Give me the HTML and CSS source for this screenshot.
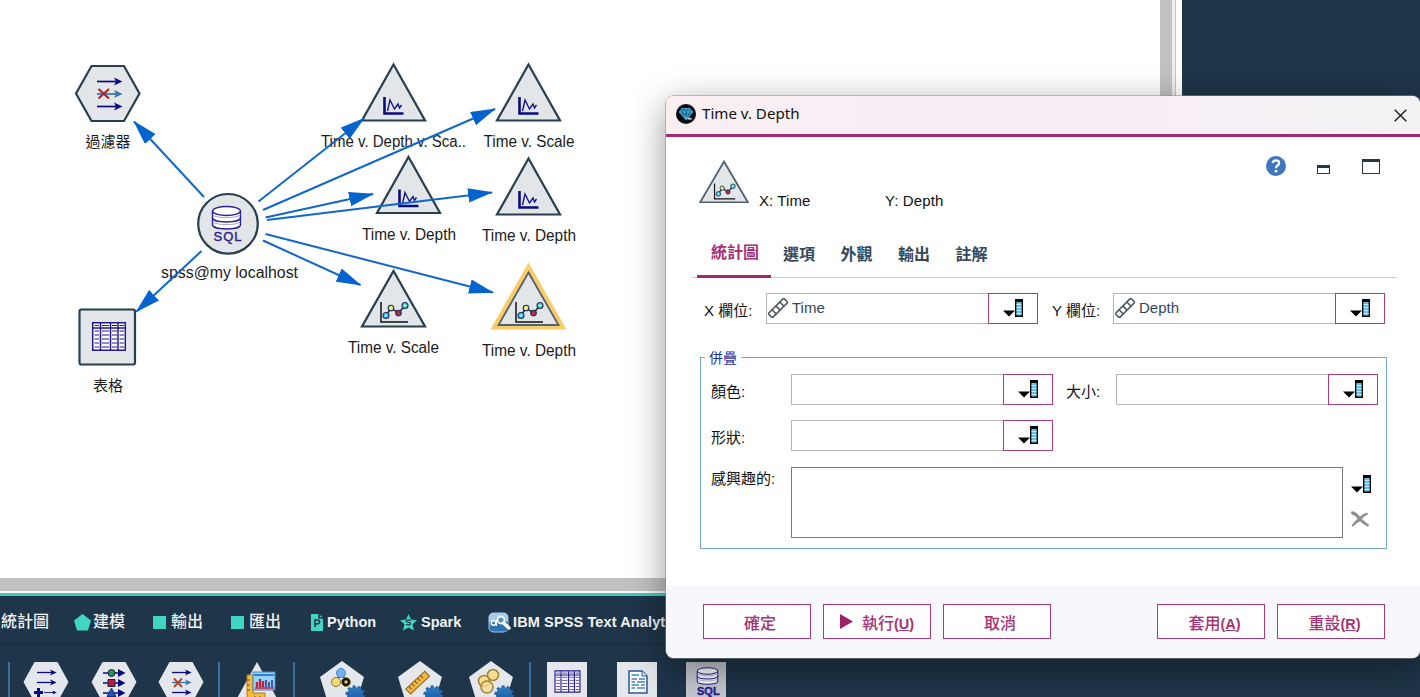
FILE: index.html
```html
<!DOCTYPE html>
<html lang="zh-Hant">
<head>
<meta charset="utf-8">
<title>Time v. Depth</title>
<link rel="stylesheet" href="styles.css">
</head>
<body>
<svg class="defs" width="0" height="0">
  <defs>
    <marker id="arrow" viewBox="0 0 24 14" refX="23" refY="7" markerWidth="25" markerHeight="14.500" markerUnits="userSpaceOnUse" orient="auto" preserveAspectRatio="none"><path d="M0 0L24 7L0 14Z" fill="#0563cd"/></marker>
    <linearGradient id="gearfill" x2="0" y2="1"><stop offset="0" stop-color="#2f7cc8"/><stop offset="1" stop-color="#185399"/></linearGradient>
    <symbol id="line-plot" viewBox="0 0 66 60" overflow="visible">
      <path class="shape" d="M33 2.500L64.500 58.500H1.500Z"/>
      <path d="M24 35V51.500H43" fill="none" stroke="#0a0a80" stroke-width="2.600"/>
      <path d="M27 49L29.500 38L34 47L37.500 42L39 46L41 43" fill="none" stroke="#15158a" stroke-width="1.400"/>
    </symbol>
    <symbol id="dots" viewBox="0 0 30 22" overflow="visible">
      <path d="M2 0V20H29" fill="none" stroke="#111" stroke-width="1.500"/>
      <path d="M7 13.500L12 6L19.500 11L26 3.500" fill="none" stroke="#222" stroke-width="1.500"/>
      <g stroke="#163463" stroke-width="1.100"><circle cx="7" cy="13.500" r="3" fill="#3cc4f2"/><circle cx="12" cy="6" r="2.800" fill="#e2e64b"/><circle cx="19.500" cy="11" r="2.800" fill="#c8283f"/><circle cx="26" cy="3.500" r="3" fill="#4ccfb1"/></g>
      <path d="M5.500 13.500h3M7 12v3M10.500 6h3M12 4.500v3M24.500 3.500h3M26 2v3" stroke="#fff" stroke-width=".6"/>
    </symbol>
    <symbol id="db" viewBox="0 0 34 40" overflow="visible">
      <g fill="none" stroke="#27208f" stroke-width="1.400"><path d="M3 5.500V18.500C3 24.500 31 24.500 31 18.500V5.500" fill="#fff"/><ellipse cx="17" cy="5" rx="14" ry="4.500" fill="#fff"/><path d="M3 11.500C3 17.500 31 17.500 31 11.500"/></g>
      <path d="M3 9C8 12.500 26 12.500 31 9M3 16C8 19.500 26 19.500 31 16" fill="none" stroke="#8f8bc8" stroke-width=".8"/>
    </symbol>
    <symbol id="table" viewBox="0 0 34 29" overflow="visible">
      <path d="M.7.700H33.300V28.300H.7Z" fill="#fff" stroke="#23188c" stroke-width="1.500"/>
      <path d="M8.500 1V28M18.500 1V28M26 1V28M1 6H33" fill="none" stroke="#23188c" stroke-width="1.500"/>
      <path d="M2.500 3.500H7M10 3.500H17M20 3.500H25M27.500 3.500H32M2.500 9H7M10 9H17M20 9H25M27.500 9H32M2.500 13H7M10 13H17M20 13H25M27.500 13H32M2.500 17H7M10 17H17M20 17H25M27.500 17H32M2.500 21H7M10 21H17M20 21H25M27.500 21H32M2.500 25H7M10 25H17M20 25H25M27.500 25H32" stroke="#23188c" stroke-width="1"/>
    </symbol>
    <symbol id="arr" viewBox="0 0 26 8" overflow="visible"><path d="M0 4H22" stroke="currentColor" stroke-width="1.700"/><path d="M17 0L25.500 4L17 8L19 4Z" fill="currentColor"/></symbol>
    <symbol id="picker" viewBox="0 0 20 18" overflow="visible">
      <path d="M0 11.500H12L6 17.500Z" fill="#000"/>
      <path d="M12.700.7H19.300V17.300H12.700Z" fill="#68c0ea" stroke="#000" stroke-width="1.400"/>
      <path d="M12 0H20V3H12Z" fill="#000"/><path d="M13.500 5.500H18.500M13.500 8.500H18.500M13.500 11.500H18.500M13.500 14.500H18.500" stroke="#bfe8fa" stroke-width="1"/>
    </symbol>
    <symbol id="ruler" viewBox="0 0 20 20" overflow="visible">
      <g transform="rotate(-45 10 10)" fill="#fff" stroke="#46535c" stroke-width="1.500"><path d="M-1 7H21V13H-1ZM4.500 7V13M10 7V13M15.500 7V13"/></g>
    </symbol>
    <symbol id="gear" viewBox="0 0 20 20" overflow="visible"><circle cx="10" cy="10" r="8" fill="url(#gearfill)"/><circle cx="10" cy="10" r="8.500" fill="none" stroke="#2468ae" stroke-width="2.500" stroke-dasharray="3 2.340"/></symbol>
  </defs>
</svg>

<div class="app">
  <div class="upper">
    <div class="canvas">
      <svg class="stream" width="1160" height="578" viewBox="0 0 1160 578">
        <path class="shape" d="M91.500 66H124L139.500 93.500L124 121H91.500L76 93.500Z"/>
        <g color="#0a0a80"><use href="#arr" x="97" y="77.500" width="26" height="8"/><use href="#arr" x="97" y="102.500" width="26" height="8"/></g>
        <use href="#arr" x="97" y="90" width="26" height="8" color="#3a72a8"/>
        <path d="M98.500 89L109 98.500M109 89L98.500 98.500" stroke="#a3282e" stroke-width="2.200"/>
        <circle class="shape" cx="228" cy="223.800" r="29.800"/>
        <use href="#db" x="209.500" y="206" width="34" height="40"/>
        <text class="sql" x="213.500" y="241" textLength="28">SQL</text>
        <rect class="shape" x="79.500" y="309.500" width="55.500" height="55" rx="2"/>
        <use href="#table" x="92" y="322" width="34" height="29"/>
        <use href="#line-plot" x="360.500" y="62" width="66" height="60"/>
        <use href="#line-plot" x="495.500" y="62" width="66" height="60"/>
        <use href="#line-plot" x="375.500" y="154.500" width="66" height="60"/>
        <use href="#line-plot" x="495.500" y="156" width="66" height="60"/>
        <path class="shape" d="M393.500 271L425 326.500H362Z"/>
        <use href="#dots" x="379" y="302" width="30" height="22"/>
        <path d="M528.500 269.500L560.500 326H496.500Z" fill="#e2e6e9" stroke="#facb69" stroke-width="7"/>
        <path d="M528.500 272.500L558.500 325H498.500Z" fill="#e2e6e9" stroke="#51636f" stroke-width="1.800"/>
        <use href="#dots" x="514" y="302" width="30" height="22"/>
        <g class="names">
          <text x="85.500" y="147" textLength="45">過濾器</text>
          <text x="93" y="391" textLength="30">表格</text>
          <text x="161" y="278" textLength="137" lengthAdjust="spacingAndGlyphs">spss@my localhost</text>
          <text x="321" y="147" textLength="145" lengthAdjust="spacingAndGlyphs">Time v. Depth v. Sca..</text>
          <text x="483.500" y="147" textLength="91" lengthAdjust="spacingAndGlyphs">Time v. Scale</text>
          <text x="362" y="239.500" textLength="94" lengthAdjust="spacingAndGlyphs">Time v. Depth</text>
          <text x="482" y="241" textLength="94" lengthAdjust="spacingAndGlyphs">Time v. Depth</text>
          <text x="348" y="353" textLength="91" lengthAdjust="spacingAndGlyphs">Time v. Scale</text>
          <text x="482" y="356" textLength="94" lengthAdjust="spacingAndGlyphs">Time v. Depth</text>
        </g>
        <g class="edges">
          <path d="M204 197L134 121.500" marker-end="url(#arrow)"/>
          <path d="M201.500 251L136.500 311.500" marker-end="url(#arrow)"/>
          <path d="M258.500 201.500L364 118.500" marker-end="url(#arrow)"/>
          <path d="M263 210L495 109" marker-end="url(#arrow)"/>
          <path d="M265.500 217.500L373 194" marker-end="url(#arrow)"/>
          <path d="M267 220L492 192.500" marker-end="url(#arrow)"/>
          <path d="M265.500 234L493 292.500" marker-end="url(#arrow)"/>
          <path d="M263 240.500L360.500 285" marker-end="url(#arrow)"/>
        </g>
      </svg>
    </div>
    <div class="vbar"></div>
    <div class="gutter"></div>
    <div class="side"></div>
  </div>
  <div class="hbar"></div>
  <div class="palette">
    <div class="cats">
      <span class="cat c1">統計圖</span>
      <span class="cat c2"><svg width="17" height="17" viewBox="0 0 17 17"><path d="M8.500 0L17 6.500L14 16.500H3L0 6.500Z" fill="#41d6c3"/></svg>建模</span>
      <span class="cat c3"><i class="sq"></i>輸出</span>
      <span class="cat c4"><i class="sq"></i>匯出</span>
      <span class="cat c5"><svg width="12" height="17" viewBox="0 0 12 17"><path d="M0 0H8L12 4V17H0Z" fill="#41d6c3"/><path d="M4 13V6H6.500Q9 6.200 8.500 8.500Q8 10 4 10M8 0V4H12" fill="none" stroke="#1f3549" stroke-width="1.500"/></svg>Python</span>
      <span class="cat c6"><svg width="17" height="17" viewBox="0 0 17 17"><path d="M8.500 0L11 5.500L17 6.200L12.500 10.200L14 16.500L8.500 13.500L3 16.500L4.500 10.200L0 6.200L6 5.500Z" fill="#41d6c3"/><path d="M11 6.500Q6 4.800 6.200 7.300Q7 8.200 10 8.700Q11.500 11.800 6 10.500" fill="none" stroke="#1f3549" stroke-width="1.200"/></svg>Spark</span>
      <span class="cat c7"><svg width="23" height="21" viewBox="0 0 23 21"><rect x=".5" y=".5" width="20" height="20" rx="5" fill="#a9cbe8"/><path d="M1.500 10Q10 6 20 10V16Q20 19.500 16 19.500H5Q1.500 19.500 1.500 16Z" fill="#2f72b2"/><circle cx="5.500" cy="11" r="2.200" fill="none" stroke="#fff" stroke-width="1.500"/><path d="M8.300 8V14" stroke="#fff" stroke-width="1.500"/><circle cx="13" cy="8" r="3.500" fill="#4f90c8" stroke="#fff" stroke-width="1.800"/><path d="M15.500 11L21 16" stroke="#fff" stroke-width="3.500" stroke-linecap="round"/></svg>IBM SPSS Text Analytics</span>
    </div>
    <div class="tools">
      <i class="sep s1"></i>
      <svg class="t1" width="46" height="40" viewBox="0 0 46 40"><path d="M11.500 0H34.500L45.500 20L34.500 40H11.500L.5 20Z" fill="#e4e8ec"/><g color="#0a0a80"><use href="#arr" x="14" y="7" width="20" height="7"/><use href="#arr" x="14" y="17" width="20" height="7"/><use href="#arr" x="21" y="27" width="13" height="7"/></g><path d="M15.500 26V35M11 30.500H20" stroke="#0a0a80" stroke-width="3"/></svg>
      <svg class="t2" width="46" height="40" viewBox="0 0 46 40"><path d="M11.500 0H34.500L45.500 20L34.500 40H11.500L.5 20Z" fill="#e4e8ec"/><path d="M12 11H28M12 21H28M12 31H28" stroke="#0a0a80" stroke-width="1.600"/><path d="M27 7L34.500 11L27 15ZM27 17L34.500 21L27 25ZM27 27L34.500 31L27 35Z" fill="#0a0a80"/><circle cx="20.500" cy="11" r="3.500" fill="#159768" stroke="#222"/><path d="M17 17.500H24V24.500H17Z" fill="#bb1651" stroke="#222"/><path d="M16 34.500L20.500 26L25 34.500Z" fill="#1757c5" stroke="#14316b"/></svg>
      <svg class="t3" width="46" height="40" viewBox="0 0 46 40"><path d="M11.500 0H34.500L45.500 20L34.500 40H11.500L.5 20Z" fill="#e4e8ec"/><g color="#0a0a80"><use href="#arr" x="14" y="7" width="20" height="7"/><use href="#arr" x="14" y="27" width="20" height="7"/></g><use href="#arr" x="14" y="17" width="20" height="7" color="#3a72a8"/><path d="M16 16.500L24 25M24 16.500L16 25" stroke="#b2462b" stroke-width="1.900"/></svg>
      <i class="sep s2"></i>
      <svg class="t4" width="46" height="40" viewBox="0 0 46 40"><path d="M22 0L44 40H0Z" fill="#e4e8ec"/><path d="M12 13H18V31H30V38H12Z" fill="#f2bd3d" stroke="#ba7a13"/><path d="M12 18H15M12 23H15M12 28H15M20 34V38M25 34V38" stroke="#805610"/><rect x="18" y="10" width="22" height="18" fill="#96d2f7" stroke="#3e88c7"/><path d="M19 13H39" stroke="#2e83d1" stroke-width="2"/><path d="M22 25V20M25 25V17M28 25V19" stroke="#c31f38" stroke-width="2.300"/><path d="M31 25V18M34 25V20M37 25V18" stroke="#45579a" stroke-width="2"/><path d="M20 26H39" stroke="#c31f38" stroke-width="1.500"/></svg>
      <i class="sep s3"></i>
      <svg class="t5" width="46" height="44" viewBox="0 0 46 44"><path d="M23 0L45 16L37 42H9L1 16Z" fill="#e4e8ec"/><path d="M17 20L22 12L28 21" stroke="#555" stroke-width="2" fill="none"/><circle cx="22" cy="12" r="4.500" fill="#72b2f2" stroke="#4187d2"/><circle cx="17" cy="21" r="4.500" fill="#f4dc79" stroke="#8c732b"/><circle cx="27" cy="21" r="4.500" fill="#111" stroke="#9a8b38"/><circle cx="27" cy="21" r="1.800" fill="#d9c751"/><use href="#gear" x="26" y="24" width="20" height="20"/></svg>
      <svg class="t6" width="46" height="44" viewBox="0 0 46 44"><path d="M23 0L45 16L37 42H9L1 16Z" fill="#e4e8ec"/><g transform="rotate(-43 21 22)"><rect x="8" y="18" width="26" height="7" fill="#f0b83e" stroke="#8c6422"/><path d="M12 18V22M16 18V22M20 18V22M24 18V22M28 18V22" stroke="#75521b"/></g><use href="#gear" x="26" y="24" width="20" height="20"/></svg>
      <svg class="t7" width="46" height="44" viewBox="0 0 46 44"><path d="M23 0L45 16L37 42H9L1 16Z" fill="#e4e8ec"/><g fill="#f7df91" stroke="#a48235" stroke-width="1.500"><circle cx="25" cy="14" r="5.500"/><circle cx="16" cy="20" r="5.500"/><circle cx="19" cy="26" r="6" fill-opacity=".75"/></g><use href="#gear" x="26" y="24" width="20" height="20"/></svg>
      <i class="sep s4"></i>
      <svg class="t8" width="40" height="40" viewBox="0 0 40 40"><path d="M0 0H40V40H0Z" fill="#e4e8ec"/><use href="#table" x="7.500" y="8" width="26" height="23"/></svg>
      <svg class="t9" width="40" height="40" viewBox="0 0 40 40"><path d="M0 0H40V40H0Z" fill="#e4e8ec"/><path d="M12 9H25L30 14V31H12Z" fill="#fff" stroke="#28569a" stroke-width="1.500"/><path d="M25 9V14H30" fill="#d8eaff" stroke="#28569a"/><path d="M14.500 13H22M14.500 17H20M22 17H28M14.500 20H18M20 20H28M14.500 23H22M24 23H28M14.500 26H18M20 26H28" stroke="#4a82bf" stroke-width="1.600"/></svg>
      <svg class="t10" width="40" height="40" viewBox="0 0 40 40"><path d="M0 0H40V40H0Z" fill="#c5c8ce"/><use href="#db" x="9" y="5" width="25" height="30"/><text x="11" y="33" class="sql mini">SQL</text></svg>
    </div>
  </div>
</div>

<section class="dialog">
  <header class="titlebar">
    <svg width="20" height="20" viewBox="0 0 20 20"><circle cx="10" cy="10" r="10" fill="#05090e"/><path d="M3.500 8L6 4.500H13.500L16.500 8L10 15.500Z" fill="#155b84" stroke="#3ba4d8" stroke-width="1.200"/><path d="M3.500 8H16.500M6 4.500L8 8L10 15L12.500 8L13.500 4.500M8 8L10 4.500L12.500 8" fill="none" stroke="#52b9e5" stroke-width=".8"/><path d="M11 15Q13 12.500 15 14L16.500 15.500H12Z" fill="#ddd"/></svg>
    <span class="title">Time v. Depth</span>
    <svg class="close" width="13" height="13" viewBox="0 0 13 13"><path d="M.7.700L12.300 12.300M12.300.7L.7 12.300" stroke="#111" stroke-width="1.300"/></svg>
  </header>
  <div class="summary">
    <svg class="big" width="50" height="44" viewBox="0 0 50 44"><path d="M25 2.500L49 43.500H1Z" fill="#e2e6e9" stroke="#50606c" stroke-width="1.800"/><use href="#dots" x="14" y="24.500" width="23" height="17"/></svg>
    <span class="xt">X: Time</span><span class="yt">Y: Depth</span>
    <div class="wicons">
      <svg class="help" width="20" height="20" viewBox="0 0 20 20"><circle cx="10" cy="10" r="10" fill="#3f76be"/><path d="M6.700 7Q7 4.300 10 4.300Q13.200 4.300 13.200 7Q13.200 8.500 11.500 9.500Q10 10.500 10 12.200" fill="none" stroke="#fff" stroke-width="2.200"/><circle cx="10" cy="15.200" r="1.400" fill="#fff"/></svg>
      <i class="min"></i><i class="max"></i>
    </div>
  </div>
  <nav class="tabs"><span class="tab on">統計圖</span><span class="tab">選項</span><span class="tab">外觀</span><span class="tab">輸出</span><span class="tab">註解</span></nav>
  <div class="row axes">
    <label class="lx">X 欄位:</label>
    <div class="field wx"><svg width="20" height="20"><use href="#ruler" width="20" height="20"/></svg>Time</div><div class="pick"><svg width="20" height="18"><use href="#picker" width="20" height="18"/></svg></div>
    <label class="ly">Y 欄位:</label>
    <div class="field wy"><svg width="20" height="20"><use href="#ruler" width="20" height="20"/></svg>Depth</div><div class="pick"><svg width="20" height="18"><use href="#picker" width="20" height="18"/></svg></div>
  </div>
  <div class="group">
    <div class="legend">併疊</div>
    <div class="row r1"><label class="lg">顏色:</label><div class="field w2"></div><div class="pick"><svg width="20" height="18"><use href="#picker" width="20" height="18"/></svg></div><label class="lsize">大小:</label><div class="field w2"></div><div class="pick"><svg width="20" height="18"><use href="#picker" width="20" height="18"/></svg></div></div>
    <div class="row r2"><label class="lg">形狀:</label><div class="field w2"></div><div class="pick"><svg width="20" height="18"><use href="#picker" width="20" height="18"/></svg></div></div>
    <div class="row r3"><label class="lg top">感興趣的:</label><div class="area"></div>
      <div class="acts"><svg width="20" height="18"><use href="#picker" width="20" height="18"/></svg><svg width="18" height="16" viewBox="0 0 18 16"><path d="M0 1Q3-1 9 6Q13 2 16.500 2L17 3Q13 5 10.500 8Q14 11 18 14L17 15.500Q12 13 9 10Q5 12 2 15.500L.8 14.500Q4 10 7 7.500Q4 4 .5 3Z" fill="#8e8e8e" stroke="#8e8e8e" stroke-width=".5"/></svg></div>
    </div>
  </div>
  <footer class="buttons">
    <span class="btn"><b class="ok">確定</b></span>
    <span class="btn run"><svg width="13" height="15" viewBox="0 0 13 15"><path d="M0 0L13 7.500L0 15Z" fill="#a0206c"/></svg><b>執行<span class="key">(<u>U</u>)</span></b></span>
    <span class="btn"><b class="cancel">取消</b></span>
    <span class="btn apply"><b>套用<span class="key">(<u>A</u>)</span></b></span>
    <span class="btn"><b>重設<span class="key">(<u>R</u>)</span></b></span>
  </footer>
</section>
</body>
</html>
```
FILE: styles.css
```css
* { box-sizing: border-box; }
body {
  margin: 0;
  width: 1420px;
  height: 697px;
  overflow: hidden;
  position: relative;
  background: #1f3549;
  font-family: "Liberation Sans", "Noto Sans CJK TC", sans-serif;
  font-size: 15px;
  color: #111;
}
svg { display: block; flex: none; }
.defs { position: absolute; }
.app { display: flex; flex-direction: column; height: 697px; }
.upper { display: flex; height: 578px; }
.canvas { width: 1160px; background: #fff; }
.vbar { width: 12px; background: #c1c1c1; }
.gutter { width: 10px; background: #fff; border-left: 3px solid #eee; box-shadow: inset 1px 0 #bcc6d8; }
.side { flex: 1; background: #1f3549; }
.hbar { height: 18px; background: #c1c1c1; border-bottom: 3px solid #41cdbb; box-shadow: inset 0 -2px #fafafa; }
.shape { fill: #e2e6e9; stroke: #273f4e; stroke-width: 2.2px; }
.edges path { fill: none; stroke: #1267c8; stroke-width: 2px; }
.names { fill: #1b1b1b; font-size: 16px; }
.names text:nth-child(-n+2) { font-size: 15px; }
.sql { fill: #27208f; font-size: 13px; font-weight: normal; stroke: #27208f; stroke-width: .4px; }
.mini { font-size: 11px; font-weight: bold; }

.palette { flex: 1; overflow: hidden; color: #f0f3f5; }
.cats { display: flex; height: 49px; align-items: center; border-bottom: 1px solid #152a3b; padding-top: 4px; white-space: nowrap; font-weight: bold; font-size: 14.5px; }
.cat { display: flex; align-items: center; flex: none; line-height: 20px; }
.c1, .c2, .c3, .c4 { font-size: 16px; font-weight: 500; }
.c1 { width: 74px; padding-left: 1px; }
.c2 { width: 79px; gap: 2px; }
.c3 { width: 78px; gap: 5px; }
.c4 { width: 80px; gap: 5px; }
.c5 { width: 89px; gap: 4px; }
.c6 { width: 88px; gap: 4px; }
.c7 { gap: 2px; letter-spacing: .12px; }
.sq { width: 13px; height: 13px; background: #41d6c3; }
.tools { display: flex; height: 60px; padding: 17px 0 0 0; align-items: flex-start; }
.sep { width: 2px; height: 50px; background: #386f9d; flex: none; }
.s1 { margin-left: 8px; }
.t1 { margin-left: 13px; }
.t2 { margin-left: 21.5px; }
.t3 { margin-left: 21.5px; }
.s2 { margin-left: 14px; }
.t4 { margin-left: 15px; }
.s3 { margin-left: 11.5px; }
.t5 { margin: -1px 0 0 24px; }
.t6 { margin: -1px 0 0 32px; }
.t7 { margin: -1px 0 0 25px; }
.s4 { margin-left: 15px; }
.t8 { margin-left: 16.5px; }
.t9 { margin-left: 30px; }
.t10 { margin-left: 29px; }

.dialog {
  position: absolute;
  left: 666px;
  top: 96px;
  width: 754px;
  height: 562px;
  border-radius: 8px;
  overflow: hidden;
  background: #fff;
  display: flex;
  flex-direction: column;
  box-shadow: 0 0 0 1px #8f8f8f88, 0 10px 36px rgba(0,0,0,.42);
}
.titlebar { display: flex; align-items: center; height: 41px; flex: none; padding: 0 13px 2px 10px; border-bottom: 3px solid #9e2b70; background: linear-gradient(90deg, #f9efef, #f8edf7 30%, #f8edf7 65%, #f4f1f4 85%, #f3f3f3); }
.title { flex: 1; margin: -3px 0 0 6px; font: 15.1px "Noto Sans", sans-serif; }
.close { margin-top: 2px; }
.summary { display: flex; height: 103px; flex: none; padding: 22px 40px 0 33px; }
.xt { margin: 33px 0 0 10px; width: 126px; letter-spacing: .1px; }
.yt { margin-top: 33px; letter-spacing: .1px; }
.wicons { display: flex; margin: -2px 0 0 auto; height: 20px; align-items: flex-end; }
.help { margin-bottom: 1px; }
.min { width: 13px; height: 9px; border: 1px solid #263746; border-top-width: 3px; margin: 0 32px 3px 31px; }
.max { width: 18px; height: 15px; border: 1px solid #263746; border-top-width: 3px; margin-bottom: 3px; }
.tabs { display: flex; height: 38px; flex: none; margin: 0 23px 0 25px; padding-left: 6px; border-bottom: 1px solid #ccc; font-size: 16px; color: #34495a; font-weight: 600; }
.tab { width: 32px; margin-left: 25.5px; padding-top: 5px; line-height: 20px; white-space: nowrap; }
.tab.on + .tab { margin-left: 12px; }
.tab.on { width: 74px; margin-left: 0; padding: 3px 0 0 14px; color: #a82f76; border-bottom: 3px solid #a0266e; height: 38px; }
.row { display: flex; }
.field { height: 31px; border: 1px solid #b5b5b5; border-right: 0; display: flex; color: #34465a; line-height: 28px; gap: 4px; padding-left: 1px; }
.field svg { margin-top: 4px; }
.pick { width: 50px; height: 31px; border: 1.5px solid #ad3a7b; padding: 5px 0 0 14px; }
label { white-space: nowrap; line-height: 20px; }
.axes { margin: 15px 0 0 38px; height: 64px; flex: none; }
.axes .pick { width: 50px; }
.lx { width: 62px; padding-top: 8px; }
.wx, .wy { width: 222px; }
.ly { width: 61px; margin-left: 14px; padding-top: 8px; }
.group { width: 687px; height: 192px; margin: 0 0 0 34px; border: 1px solid #75a6d1; flex: none; position: relative; padding: 16px 0 0 10px; }
.legend { position: absolute; left: 4px; top: -10px; padding: 0 4px; background: #fff; line-height: 20px; font-size: 14px; color: #1f2f9e; }
.r1, .r2 { height: 46px; }
.lg { width: 80px; padding-top: 8px; }
.lg.top { padding-top: 2px; }
.w2 { width: 212px; }
.lsize { margin-left: 13px; width: 50px; padding-top: 8px; }
.r3 { padding-top: 1px; }
.area { width: 552px; height: 71px; border: 1px solid #767676; }
.acts { display: flex; flex-direction: column; gap: 18px; margin: 8px 0 0 8px; }
.buttons { display: flex; gap: 12px; margin-top: 36px; height: 74px; flex: none; padding: 19px 0 0 37px; background: #f8f7fb; }
.btn { display: flex; width: 108px; height: 35px; align-items: center; justify-content: center; gap: 9px; border: 1.5px solid #aa3a79; background: #fff; color: #a53474; font-size: 16px; flex: none; }
.btn b { font-weight: 500; }
.key { font-size: 14.5px; font-weight: bold; }
.ok { margin-left: 6px; }
.cancel { margin-left: 6px; }
.apply { margin-left: 94px; }
.apply b, .apply + .btn b { margin-left: 7px; }
```
